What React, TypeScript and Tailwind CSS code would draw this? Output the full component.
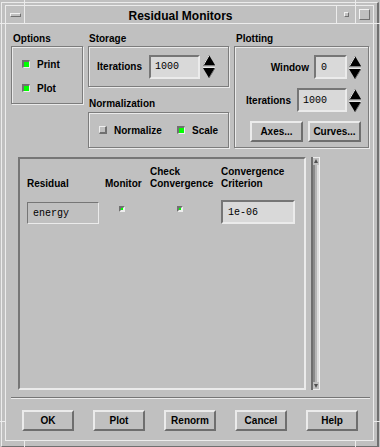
import type { ReactNode } from 'react'

type Props = { children?: ReactNode; className?: string }

function Label({ children, className = '' }: Props) {
  return <div className={`h-[12px] text-[10px] font-bold leading-[12px] ${className}`}>{children}</div>
}

// etched-in group frame
function Etched({ children, className = '' }: Props) {
  return (
    <div className={`border border-[#7c7c7c] shadow-[inset_1px_1px_0_#ebebeb,1px_1px_0_#ebebeb] ${className}`}>
      {children}
    </div>
  )
}

function Field({ children, className = '' }: Props) {
  return (
    <div
      className={`flex h-[24px] items-center border-2 border-t-[#767676] border-l-[#767676] border-r-[#ebebeb] border-b-[#ebebeb] bg-[#d9d9d9] font-['Liberation_Mono',monospace] text-[10px] ${className}`}
    >
      {children}
    </div>
  )
}

function Btn({ children, className = '' }: Props) {
  return (
    <div
      className={`flex h-[21px] items-center justify-center border-2 border-t-[#ebebeb] border-l-[#ebebeb] border-r-[#6e6e6e] border-b-[#6e6e6e] text-[10px] font-bold ${className}`}
    >
      {children}
    </div>
  )
}

function Toggle({ on }: { on: boolean }) {
  if (on) {
    return (
      <span className="block h-[8px] w-[8px] shrink-0 border-t-2 border-l-2 border-r border-b border-t-[#707070] border-l-[#707070] border-r-[#eeeeee] border-b-[#eeeeee] bg-[#00ff00]" />
    )
  }
  return (
    <span className="block h-[8px] w-[8px] shrink-0 border-t border-l border-r-2 border-b-2 border-t-[#eeeeee] border-l-[#eeeeee] border-r-[#707070] border-b-[#707070] bg-[#c0c0c0]" />
  )
}

function SmallCheck() {
  return (
    <span className="block h-[6px] w-[6px] border-2 border-t-[#707070] border-l-[#707070] border-r-[#eeeeee] border-b-[#eeeeee] bg-[#00ff00]" />
  )
}

function Spin({ className = '' }: Props) {
  return (
    <svg className={`shrink-0 ${className}`} width="12" height="23" viewBox="0 0 12 23">
      <polygon points="6,0 12,10 0,10" fill="#000" />
      <line x1="0.5" y1="10" x2="6" y2="0.5" stroke="#f0f0f0" />
      <line x1="0" y1="10.5" x2="12" y2="10.5" stroke="#808080" />
      <line x1="0" y1="12.5" x2="12" y2="12.5" stroke="#e6e6e6" />
      <polygon points="0,13 12,13 6,23" fill="#000" />
      <line x1="12" y1="13" x2="6" y2="23" stroke="#707070" />
    </svg>
  )
}

function Scrollbar() {
  return (
    <div className="ml-[5px] flex h-[233px] w-[9px] flex-col">
      <svg width="9" height="8" viewBox="0 0 9 8">
        <rect x="0" y="0" width="9" height="8" fill="#c0c0c0" />
        <rect x="0" y="0" width="2" height="8" fill="#6e6e6e" />
        <rect x="2" y="0" width="7" height="1" fill="#ececec" />
        <rect x="8" y="0" width="1" height="8" fill="#f2f2f2" />
        <polygon points="5,2 7,6 3,6" fill="#505050" />
      </svg>
      <div className="flex flex-1">
        <div className="w-[2px] bg-[#6e6e6e]" />
        <div className="w-[2px] bg-[#8a8a8a]" />
        <div className="w-[2px] bg-[#b6b6b6]" />
        <div className="w-[2px] bg-[#dddddd]" />
        <div className="w-[1px] bg-[#f2f2f2]" />
      </div>
      <svg width="9" height="8" viewBox="0 0 9 8">
        <rect x="0" y="0" width="9" height="8" fill="#c0c0c0" />
        <rect x="0" y="0" width="2" height="8" fill="#6e6e6e" />
        <rect x="8" y="0" width="1" height="8" fill="#f2f2f2" />
        <rect x="2" y="7" width="7" height="1" fill="#ececec" />
        <polygon points="3,2 7,2 5,6" fill="#505050" />
      </svg>
    </div>
  )
}

export default function App() {
  return (
    <div className="relative h-[447px] w-[380px] overflow-hidden bg-[#c0c0c0] px-[1px] pt-[2px] font-['Liberation_Sans',Arial,sans-serif] text-black">
      {/* frame resize marks */}
      <div className="absolute left-0 top-[23px] h-px w-[5px] bg-[#ececec]" />
      <div className="absolute right-0 top-[23px] h-px w-[6px] bg-[#ececec]" />
      <div className="absolute left-0 top-[421px] h-px w-[5px] bg-[#ececec]" />
      <div className="absolute right-0 top-[421px] h-px w-[6px] bg-[#ececec]" />
      <div className="absolute left-[24px] top-0 h-[5px] w-px bg-[#ececec]" />
      <div className="absolute left-[355px] top-0 h-[5px] w-px bg-[#ececec]" />
      <div className="absolute bottom-0 left-[24px] h-[7px] w-px bg-[#ececec]" />
      <div className="absolute bottom-0 left-[355px] h-[7px] w-px bg-[#ececec]" />

      <div className="h-[445px] border-t border-l border-r-2 border-b border-t-[#ececec] border-l-[#ececec] border-r-[#707070] border-b-[#707070] px-[3px] pt-[2px] pb-[5px]">
        <div className="flex h-[436px] flex-col border border-[#ececec]">
          {/* title bar */}
          <div className="flex h-[18px] border-b border-[#ececec]">
            <div className="flex w-[19px] items-center border-r border-[#ececec] pl-[4px]">
              <span className="block h-[4px] w-[11px] border border-t-[#f2f2f2] border-l-[#f2f2f2] border-r-[#707070] border-b-[#707070]" />
            </div>
            <div className="flex flex-1 items-center justify-center border-r border-[#ececec] pt-[2px] text-[12px] font-bold">
              Residual Monitors
            </div>
            <div className="flex w-[19px] items-center justify-center border-r border-[#ececec]">
              <span className="block h-[5px] w-[5px] border border-t-[#f2f2f2] border-l-[#f2f2f2] border-r-[#707070] border-b-[#707070]" />
            </div>
            <div className="flex w-[17px] items-center justify-center">
              <span className="block h-[11px] w-[11px] border border-t-[#f2f2f2] border-l-[#f2f2f2] border-r-[#707070] border-b-[#707070]" />
            </div>
          </div>

          {/* dialog body */}
          <div className="flex flex-1 flex-col pt-[9px]">
            <div className="flex gap-[5px] pl-[5px]">
              <div className="w-[72px]">
                <Label className="pl-[2px]">Options</Label>
                <Etched className="mt-[1px] flex h-[58px] flex-col gap-[8px] pt-[9px] pl-[10px]">
                  <div className="flex h-[16px] items-center">
                    <Toggle on />
                    <span className="ml-[7px] text-[10px] font-bold">Print</span>
                  </div>
                  <div className="flex h-[16px] items-center">
                    <Toggle on />
                    <span className="ml-[7px] text-[10px] font-bold">Plot</span>
                  </div>
                </Etched>
              </div>

              <div className="w-[141px]">
                <Label className="pl-[1px]">Storage</Label>
                <Etched className="mt-[1px] flex h-[41px] items-center pl-[8px]">
                  <span className="w-[52px] text-[10px] font-bold">Iterations</span>
                  <Field className="w-[51px] pl-[4px]">1000</Field>
                  <Spin className="ml-[3px]" />
                </Etched>
                <Label className="mt-[11px] pl-[1px]">Normalization</Label>
                <Etched className="mt-[2px] flex h-[36px] items-center pl-[10px]">
                  <div className="flex w-[78px] items-center">
                    <Toggle on={false} />
                    <span className="ml-[7px] text-[10px] font-bold">Normalize</span>
                  </div>
                  <div className="flex items-center">
                    <Toggle on />
                    <span className="ml-[7px] text-[10px] font-bold">Scale</span>
                  </div>
                </Etched>
              </div>

              <div className="w-[135px]">
                <Label className="pl-[2px]">Plotting</Label>
                <Etched className="mt-[1px] flex h-[102px] flex-col items-end pt-[8px] pr-[7px]">
                  <div className="flex h-[24px] items-center">
                    <span className="mr-[5px] text-[10px] font-bold">Window</span>
                    <Field className="w-[33px] pl-[5px]">0</Field>
                    <Spin className="ml-[2px]" />
                  </div>
                  <div className="mt-[9px] flex h-[24px] items-center">
                    <span className="mr-[6px] text-[10px] font-bold">Iterations</span>
                    <Field className="w-[50px] pl-[4px]">1000</Field>
                    <Spin className="ml-[2px]" />
                  </div>
                  <div className="mt-[9px] flex gap-[5px]">
                    <Btn className="w-[53px]">Axes...</Btn>
                    <Btn className="w-[53px]">Curves...</Btn>
                  </div>
                </Etched>
              </div>
            </div>

            {/* residual table */}
            <div className="mt-[9px] flex pl-[12px]">
              <div className="h-[233px] w-[288px] border-2 border-t-[#767676] border-l-[#767676] border-r-[#ebebeb] border-b-[#ebebeb] pt-[7px] pl-[7px]">
                <div className="flex items-end text-[10px] font-bold leading-[12px]">
                  <div className="w-[78px]">Residual</div>
                  <div className="w-[45px]">Monitor</div>
                  <div className="w-[71px]">
                    Check
                    <br />
                    Convergence
                  </div>
                  <div>
                    Convergence
                    <br />
                    Criterion
                  </div>
                </div>
                <div className="mt-[10px] flex items-start">
                  <div className="w-[78px] pt-[2px]">
                    <div className="flex h-[22px] w-[72px] items-center border border-t-[#767676] border-l-[#767676] border-r-[#ebebeb] border-b-[#ebebeb] pl-[5px] font-['Liberation_Mono',monospace] text-[10px]">
                      energy
                    </div>
                  </div>
                  <div className="w-[45px] pt-[6px] pl-[14px]">
                    <SmallCheck />
                  </div>
                  <div className="w-[71px] pt-[6px] pl-[27px]">
                    <SmallCheck />
                  </div>
                  <Field className="w-[74px] pl-[5px]">1e-06</Field>
                </div>
              </div>
              <Scrollbar />
            </div>

            <div className="mt-[7px] ml-[5px] mr-[3px] h-[2px] border-t border-b border-t-[#767676] border-b-[#ebebeb]" />

            <div className="mt-[11px] flex gap-[19px] pl-[16px]">
              <Btn className="w-[52px]">OK</Btn>
              <Btn className="w-[52px]">Plot</Btn>
              <Btn className="w-[52px]">Renorm</Btn>
              <Btn className="w-[52px]">Cancel</Btn>
              <Btn className="w-[52px]">Help</Btn>
            </div>
          </div>
        </div>
      </div>
    </div>
  )
}
